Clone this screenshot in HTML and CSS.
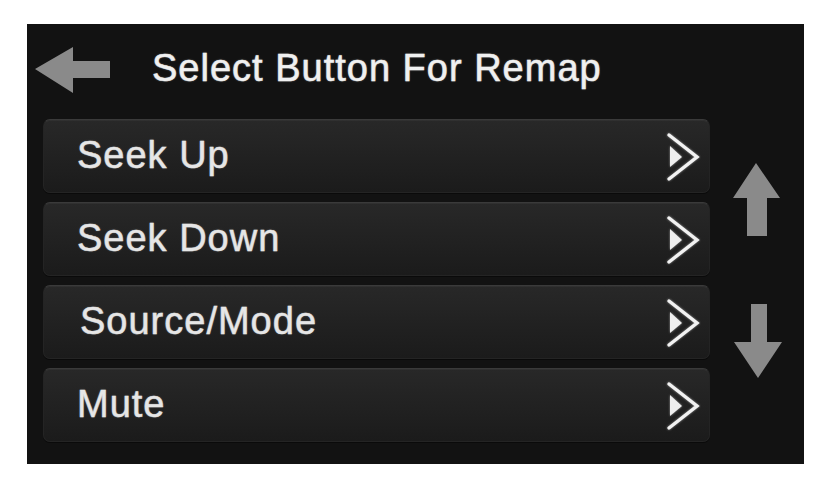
FILE: index.html
```html
<!DOCTYPE html>
<html>
<head>
<meta charset="utf-8">
<link rel="stylesheet" href="styles.css">
</head>
<body>
<div class="screen">
  <div class="header">
    <svg class="back" viewBox="0 0 75 46" width="75" height="46">
      <polygon points="0,22 38,0 38,14 75,14 75,31 38,31 38,46" fill="#8a8a8a"/>
    </svg>
    <div class="title">Select Button For Remap</div>
  </div>
  <div class="content">
    <div class="list">
      <div class="item"><span class="label">Seek Up</span>
        <svg class="chev" viewBox="0 0 34 50" width="34" height="50"><polyline points="3,3 31,25 3,47" fill="none" stroke="#f2f2f2" stroke-width="3.4" stroke-linecap="round" stroke-linejoin="miter"/><polygon points="4,14 16,25 4,35" fill="#eeeeee"/></svg>
      </div>
      <div class="item"><span class="label">Seek Down</span>
        <svg class="chev" viewBox="0 0 34 50" width="34" height="50"><polyline points="3,3 31,25 3,47" fill="none" stroke="#f2f2f2" stroke-width="3.4" stroke-linecap="round" stroke-linejoin="miter"/><polygon points="4,14 16,25 4,35" fill="#eeeeee"/></svg>
      </div>
      <div class="item"><span class="label shift">Source/Mode</span>
        <svg class="chev" viewBox="0 0 34 50" width="34" height="50"><polyline points="3,3 31,25 3,47" fill="none" stroke="#f2f2f2" stroke-width="3.4" stroke-linecap="round" stroke-linejoin="miter"/><polygon points="4,14 16,25 4,35" fill="#eeeeee"/></svg>
      </div>
      <div class="item"><span class="label">Mute</span>
        <svg class="chev" viewBox="0 0 34 50" width="34" height="50"><polyline points="3,3 31,25 3,47" fill="none" stroke="#f2f2f2" stroke-width="3.4" stroke-linecap="round" stroke-linejoin="miter"/><polygon points="4,14 16,25 4,35" fill="#eeeeee"/></svg>
      </div>
    </div>
    <div class="side">
      <svg class="up" viewBox="0 0 48 74" width="48" height="74">
        <polygon points="23,0 47,35 34,35 34,73 14,73 14,35 0,35" fill="#8a8a8a"/>
      </svg>
      <svg class="down" viewBox="0 0 48 74" width="48" height="74">
        <polygon points="17,0 33,0 33,38 48,38 24,74 0,38 17,38" fill="#8a8a8a"/>
      </svg>
    </div>
  </div>
</div>
</body>
</html>
```

FILE: styles.css
```css
html, body {
  margin: 0;
  padding: 0;
  background: #ffffff;
}
body {
  width: 833px;
  height: 488px;
  padding-top: 24px;
  padding-left: 27px;
  box-sizing: border-box;
  font-family: "Liberation Sans", Arial, sans-serif;
}
.screen {
  width: 777px;
  height: 440px;
  background: #121212;
  display: flex;
  flex-direction: column;
}
.header {
  height: 95px;
  display: flex;
  align-items: flex-start;
  padding-top: 22px;
  box-sizing: border-box;
}
.back {
  margin-left: 8px;
  margin-top: 1px;
  display: block;
}
.title {
  margin-left: 42px;
  font-size: 38px;
  line-height: 44px;
  letter-spacing: 1px;
  color: #f0f0f0;
  -webkit-text-stroke: 0.5px #f0f0f0;
  text-shadow: 0 0 2px rgba(255,255,255,0.45);
}
.content {
  display: flex;
}
.list {
  margin-left: 16px;
  width: 667px;
  display: flex;
  flex-direction: column;
  gap: 9px;
}
.item {
  height: 74px;
  box-sizing: border-box;
  border-radius: 7px;
  background: linear-gradient(#282828, #1b1b1b);
  border: 1px solid #242424;
  border-top-color: #3a3a3a;
  box-shadow: 0 1px 0 #0a0a0a, inset 0 1px 0 rgba(255,255,255,0.04);
  display: flex;
  align-items: center;
  justify-content: space-between;
  padding-left: 33px;
  padding-right: 9px;
}
.label {
  font-size: 38px;
  line-height: 44px;
  margin-top: -3px;
  letter-spacing: 1px;
  color: #e6e6e6;
  -webkit-text-stroke: 0.45px #e6e6e6;
  text-shadow: 0 0 2px rgba(255,255,255,0.35);
}
.label.shift {
  margin-left: 3px;
}
.chev {
  display: block;
  margin-top: 1px;
  filter: drop-shadow(0 0 1px rgba(255,255,255,0.5));
}
.side {
  flex: 1;
  display: flex;
  flex-direction: column;
  align-items: center;
}
.up {
  display: block;
  margin-top: 44px;
  margin-left: -1px;
}
.down {
  display: block;
  margin-top: 67px;
  margin-left: 2px;
}
```
